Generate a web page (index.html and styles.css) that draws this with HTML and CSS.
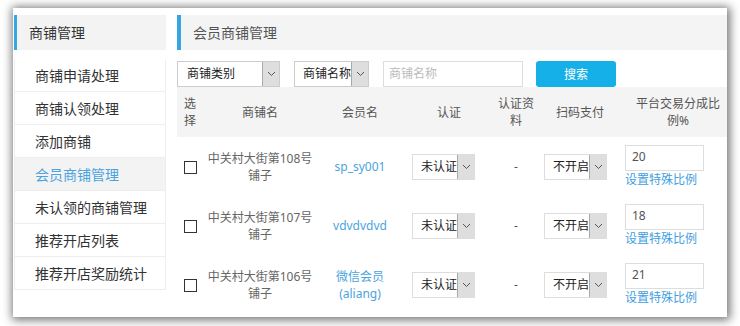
FILE: index.html
```html
<!DOCTYPE html>
<html lang="zh-CN">
<head>
    <meta charset="UTF-8">
    <title>会员商铺管理</title>
    <link rel="stylesheet" href="styles.css">
</head>
<body>
    <div class="shot">
        <div class="window">
            <aside class="side">
                <div class="side-title">商铺管理</div>
                <ul class="side-menu">
                    <li>商铺申请处理</li>
                    <li>商铺认领处理</li>
                    <li>添加商铺</li>
                    <li class="active">会员商铺管理</li>
                    <li>未认领的商铺管理</li>
                    <li>推荐开店列表</li>
                    <li>推荐开店奖励统计</li>
                </ul>
            </aside>

            <main class="main">
                <div class="main-title">会员商铺管理</div>

                <div class="filters">
                    <div class="select sel-type">
                        <span class="select-text">商铺类别</span>
                        <span class="select-arrow"><svg width="9" height="6" viewBox="0 0 9 6"><path d="M1 1l3.5 3.5L8 1" fill="none" stroke="#555" stroke-width="1"/></svg></span>
                    </div>
                    <div class="select sel-field">
                        <span class="select-text">商铺名称</span>
                        <span class="select-arrow"><svg width="9" height="6" viewBox="0 0 9 6"><path d="M1 1l3.5 3.5L8 1" fill="none" stroke="#555" stroke-width="1"/></svg></span>
                    </div>
                    <div class="text-input">商铺名称</div>
                    <button class="btn-search">搜索</button>
                </div>

                <table class="shops">
                    <colgroup>
                        <col style="width:26px">
                        <col style="width:114px">
                        <col style="width:86px">
                        <col style="width:92px">
                        <col style="width:42px">
                        <col style="width:86px">
                        <col style="width:110px">
                    </colgroup>
                    <thead>
                        <tr>
                            <th>选择</th>
                            <th>商铺名</th>
                            <th>会员名</th>
                            <th>认证</th>
                            <th>认证资料</th>
                            <th>扫码支付</th>
                            <th class="th-ratio">平台交易分成比例%</th>
                        </tr>
                    </thead>
                    <tbody>
                        <tr>
                            <td class="td-check"><span class="checkbox"></span></td>
                            <td class="td-name">中关村大街第108号铺子</td>
                            <td class="td-member"><a href="#">sp_sy001</a></td>
                            <td class="td-auth">
                                <div class="select sel-small">
                                    <span class="select-text">未认证</span>
                                    <span class="select-arrow"><svg width="9" height="6" viewBox="0 0 9 6"><path d="M1 1l3.5 3.5L8 1" fill="none" stroke="#555" stroke-width="1"/></svg></span>
                                </div>
                            </td>
                            <td class="td-doc">-</td>
                            <td class="td-pay">
                                <div class="select sel-small">
                                    <span class="select-text">不开启</span>
                                    <span class="select-arrow"><svg width="9" height="6" viewBox="0 0 9 6"><path d="M1 1l3.5 3.5L8 1" fill="none" stroke="#555" stroke-width="1"/></svg></span>
                                </div>
                            </td>
                            <td class="td-ratio">
                                <div class="ratio-input">20</div>
                                <a href="#" class="ratio-link">设置特殊比例</a>
                            </td>
                        </tr>
                        <tr>
                            <td class="td-check"><span class="checkbox"></span></td>
                            <td class="td-name">中关村大街第107号铺子</td>
                            <td class="td-member"><a href="#">vdvdvdvd</a></td>
                            <td class="td-auth">
                                <div class="select sel-small">
                                    <span class="select-text">未认证</span>
                                    <span class="select-arrow"><svg width="9" height="6" viewBox="0 0 9 6"><path d="M1 1l3.5 3.5L8 1" fill="none" stroke="#555" stroke-width="1"/></svg></span>
                                </div>
                            </td>
                            <td class="td-doc">-</td>
                            <td class="td-pay">
                                <div class="select sel-small">
                                    <span class="select-text">不开启</span>
                                    <span class="select-arrow"><svg width="9" height="6" viewBox="0 0 9 6"><path d="M1 1l3.5 3.5L8 1" fill="none" stroke="#555" stroke-width="1"/></svg></span>
                                </div>
                            </td>
                            <td class="td-ratio">
                                <div class="ratio-input">18</div>
                                <a href="#" class="ratio-link">设置特殊比例</a>
                            </td>
                        </tr>
                        <tr>
                            <td class="td-check"><span class="checkbox"></span></td>
                            <td class="td-name">中关村大街第106号铺子</td>
                            <td class="td-member"><a href="#">微信会员(aliang)</a></td>
                            <td class="td-auth">
                                <div class="select sel-small">
                                    <span class="select-text">未认证</span>
                                    <span class="select-arrow"><svg width="9" height="6" viewBox="0 0 9 6"><path d="M1 1l3.5 3.5L8 1" fill="none" stroke="#555" stroke-width="1"/></svg></span>
                                </div>
                            </td>
                            <td class="td-doc">-</td>
                            <td class="td-pay">
                                <div class="select sel-small">
                                    <span class="select-text">不开启</span>
                                    <span class="select-arrow"><svg width="9" height="6" viewBox="0 0 9 6"><path d="M1 1l3.5 3.5L8 1" fill="none" stroke="#555" stroke-width="1"/></svg></span>
                                </div>
                            </td>
                            <td class="td-ratio">
                                <div class="ratio-input">21</div>
                                <a href="#" class="ratio-link">设置特殊比例</a>
                            </td>
                        </tr>
                    </tbody>
                </table>
            </main>
        </div>
    </div>
</body>
</html>
```

FILE: styles.css
```css
body {
    margin: 0;
    background-color: #ffffff;
    font-family: "Noto Sans", "Noto Sans CJK SC", sans-serif;
    color: #333;
}

.shot {
    width: 740px;
    height: 326px;
    padding: 8px 13px 0 13px;
    box-sizing: border-box;
    overflow: hidden;
}

/* the framed window with its drop shadow */
.window {
    width: 714px;
    height: 309px;
    background: #ffffff;
    box-shadow: 1px 1px 9px 2px rgba(0, 0, 0, 0.55);
    display: flex;
    gap: 11px;
    padding: 7px 0 0 1px;
    box-sizing: border-box;
    overflow: hidden;
}

/* sidebar */
.side {
    width: 152px;
    flex: none;
}

.side-title {
    height: 35px;
    line-height: 35px;
    background-color: #f3f3f3;
    border-left: 3px solid #35a6e2;
    padding-left: 12px;
    font-size: 14px;
    color: #333;
}

.side-menu {
    list-style: none;
    margin: 9px 0 0;
    padding: 0;
    border-left: 1px solid #eeeeee;
    border-right: 1px solid #eeeeee;
}

.side-menu li {
    height: 32px;
    line-height: 34px;
    padding-left: 20px;
    font-size: 14px;
    color: #333;
    border-bottom: 1px solid #eeeeee;
    white-space: nowrap;
}

.side-menu li.active {
    background-color: #f3f3f3;
    color: #4aa3df;
}

/* main area */
.main {
    flex: 1;
    min-width: 0;
    overflow: hidden;
}

.main-title {
    height: 35px;
    line-height: 35px;
    background-color: #f4f4f4;
    border-left: 4px solid #35a6e2;
    padding-left: 12px;
    font-size: 14px;
    color: #555;
}

.filters {
    display: flex;
    margin-top: 11px;
    height: 26px;
}

.select {
    display: flex;
    height: 26px;
    border: 1px solid #cccccc;
    background: #ffffff;
    box-sizing: border-box;
    overflow: hidden;
    font-size: 12px;
    color: #222;
}

.select-text {
    flex: 1;
    min-width: 0;
    line-height: 24px;
    white-space: nowrap;
    overflow: hidden;
}

.select-arrow {
    width: 16px;
    flex: none;
    background-color: #dedede;
    border-left: 1px solid #a9a9a9;
    display: flex;
    align-items: center;
    justify-content: center;
}

.sel-type {
    width: 103px;
    margin-right: 14px;
}

.sel-type .select-text {
    padding-left: 9px;
}

.sel-field {
    width: 75px;
    margin-right: 14px;
}

.sel-field .select-text {
    padding-left: 8px;
}

.text-input {
    width: 140px;
    height: 26px;
    box-sizing: border-box;
    border: 1px solid #dddddd;
    padding-left: 5px;
    line-height: 24px;
    font-size: 12px;
    color: #bbbbbb;
    margin-right: 13px;
}

.btn-search {
    width: 80px;
    height: 26px;
    border: none;
    border-radius: 3px;
    background-color: #16b0e8;
    color: #ffffff;
    font-family: inherit;
    font-size: 12px;
    padding: 0;
    cursor: pointer;
}

/* table */
.shops {
    width: 556px;
    table-layout: fixed;
    border-collapse: collapse;
    font-size: 12px;
    line-height: 17px;
}

.shops th {
    height: 50px;
    padding: 0 2px;
    background-color: #f4f4f4;
    font-weight: normal;
    color: #555;
    text-align: center;
}

.shops th.th-ratio {
    padding: 0 8px;
}

.shops td {
    height: 59px;
    padding: 0 2px;
    vertical-align: middle;
    text-align: center;
}

.checkbox {
    display: inline-block;
    width: 13px;
    height: 13px;
    border: 1px solid #333;
    box-sizing: border-box;
    vertical-align: middle;
}

.td-name {
    color: #666;
}

.td-member a {
    color: #4ba4e0;
    text-decoration: none;
}

.shops td.td-auth {
    text-align: left;
    padding-left: 9px;
}

.td-doc {
    color: #555;
}

.shops td.td-pay {
    text-align: left;
    padding-left: 7px;
}

.sel-small {
    width: 63px;
    border-color: #dddddd;
}

.sel-small .select-text {
    padding-left: 8px;
}

.shops td.td-ratio {
    text-align: left;
    padding-left: 2px;
}

.ratio-input {
    width: 79px;
    height: 26px;
    box-sizing: border-box;
    border: 1px solid #dddddd;
    padding-left: 6px;
    line-height: 22px;
    color: #555;
}

.ratio-link {
    display: block;
    color: #3d9ee0;
    text-decoration: none;
    line-height: 17px;
}
```
